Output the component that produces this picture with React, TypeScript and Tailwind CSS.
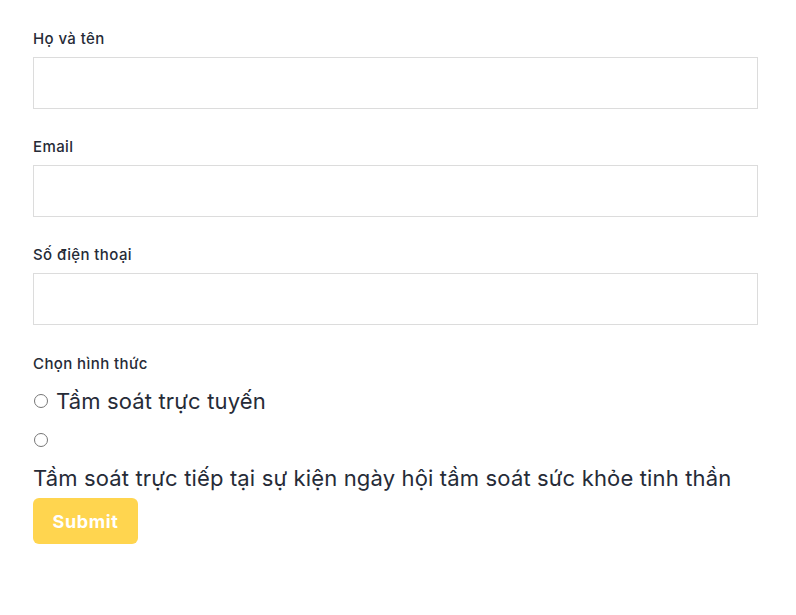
import React from "react";

const font = { fontFamily: 'Inter, "Noto Sans", "Liberation Sans", sans-serif' };

function Field({ label }: { label: string }) {
  return (
    <div className="mb-[28px]">
      <label className="block text-[15px] leading-[20px] font-medium tracking-[0.4px] text-[#262b37] mb-[8px]">{label}</label>
      <input type="text" className="block w-[725px] h-[52px] border border-[#dcdcdc] bg-white outline-none px-3" />
    </div>
  );
}

export default function App() {
  return (
    <div className="min-h-screen bg-white pl-[33px] pt-[29px]" style={font}>
      <Field label="Họ và tên" />
      <Field label="Email" />
      <Field label="Số điện thoại" />
      <div className="pt-[1px]">
        <div className="text-[15px] leading-[20px] font-medium tracking-[0.4px] text-[#262b37]">Chọn hình thức</div>
        <div className="mt-[12px] flex items-center h-[30px] text-[22px] tracking-[0.15px] text-[#262b37]">
          <input type="radio" name="ht" className="w-[14px] h-[14px] ml-[1px] mr-[8px] m-0" />
          <span>Tầm soát trực tuyến</span>
        </div>
        <div className="mt-[9px] flex items-center h-[30px]">
          <input type="radio" name="ht" className="w-[14px] h-[14px] ml-[1px] m-0" />
        </div>
        <div className="mt-[8px] text-[22px] leading-[30px] tracking-[0.15px] text-[#262b37]">
          Tầm soát trực tiếp tại sự kiện ngày hội tầm soát sức khỏe tinh thần
        </div>
        <button className="mt-[5px] w-[105px] h-[46px] rounded-[6px] bg-[#ffd54f] text-white text-[18px] font-bold tracking-[0.6px]">
          Submit
        </button>
      </div>
    </div>
  );
}
